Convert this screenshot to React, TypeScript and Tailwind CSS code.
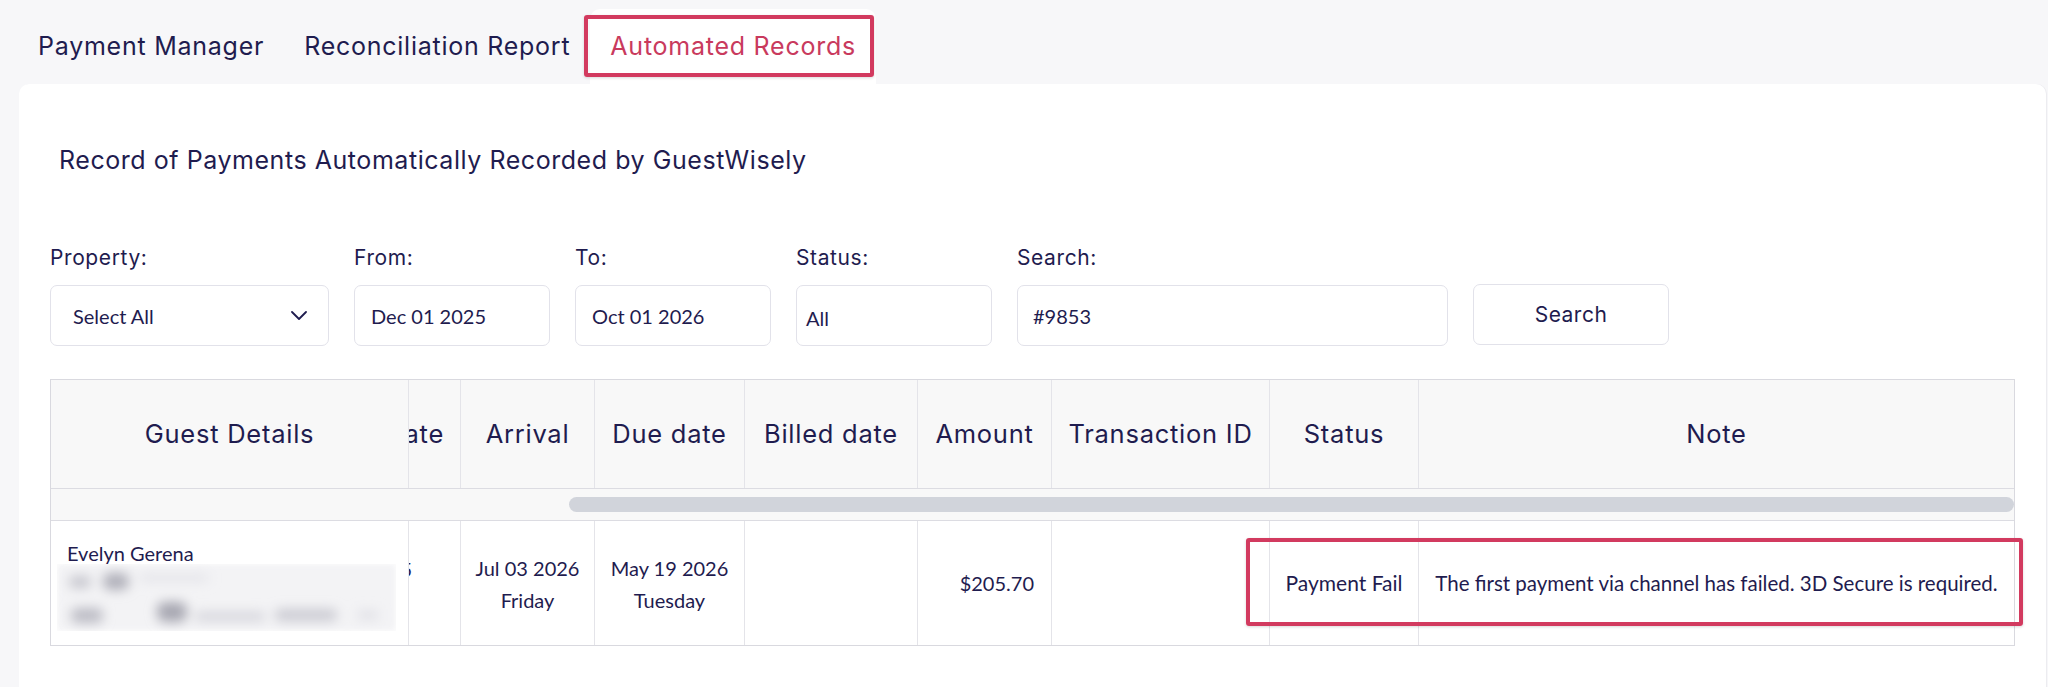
import React from "react";

const heading = "font-['Inter',_'Noto_Sans',_sans-serif]";
const body = "font-['Lato',_'Noto_Sans',_sans-serif]";

function Tabs() {
  return (
    <div className={`flex h-[84px] items-end pl-[18px] ${heading} text-[25px] tracking-[0.75px] text-[#1f1c4f]`}>
      <div className="flex h-[75px] items-center px-5">Payment Manager</div>
      <div className="flex h-[75px] items-center px-5">Reconciliation Report</div>
      <div className="relative flex h-[75px] items-center rounded-t-[10px] bg-white px-5 text-[#c93a5d]">
        Automated Records
        <span className="pointer-events-none absolute -left-[6px] top-[6px] right-[2px] bottom-[7px] rounded-[3px] border-[4px] border-[#d23a5f] shadow-[0_1px_3px_rgba(0,0,0,0.15)]" />
      </div>
    </div>
  );
}

function Field({ label, children, width }: { label: string; children: React.ReactNode; width: string }) {
  return (
    <div className={`flex flex-col gap-[15px] ${width}`}>
      <div className={`${heading} text-[21px] leading-[24px] tracking-[0.6px] text-[#1f1c4f]`}>{label}</div>
      {children}
    </div>
  );
}

const boxCls = `flex h-[61px] items-center rounded-[7px] border border-[#e2e2ea] bg-white ${body} text-[20px] text-[#1f1c4f]`;

function Filters() {
  return (
    <div className="flex items-end gap-[25px]">
      <Field label="Property:" width="w-[279px]">
        <div className={`${boxCls} justify-between pl-[22px] pr-[21px]`}>
          <span>Select All</span>
          <svg width="16" height="9" viewBox="0 0 16 9" fill="none">
            <path d="M1 1l7 7 7-7" stroke="#1f1c4f" strokeWidth="1.8" strokeLinecap="round" strokeLinejoin="round" />
          </svg>
        </div>
      </Field>
      <Field label="From:" width="w-[196px]">
        <div className={`${boxCls} pl-[16px]`}>Dec 01 2025</div>
      </Field>
      <Field label="To:" width="w-[196px]">
        <div className={`${boxCls} pl-[16px]`}>Oct 01 2026</div>
      </Field>
      <Field label="Status:" width="w-[196px]">
        <div className={`${boxCls} pl-[9px] pt-[4px]`}>All</div>
      </Field>
      <Field label="Search:" width="w-[431px]">
        <div className={`${boxCls} pl-[15px]`}>#9853</div>
      </Field>
      <button
        className={`mb-[1px] h-[61px] w-[196px] rounded-[7px] border border-[#e2e2ea] bg-white ${heading} text-[21px] tracking-[0.5px] text-[#1f1c4f]`}
      >
        Search
      </button>
    </div>
  );
}

const cols = "grid grid-cols-[357px_52px_134px_150px_173px_134px_218px_149px_1fr]";

function RedactedLines() {
  return (
    <svg width="339" height="67" viewBox="0 0 339 67" className="block">
      <defs>
        <filter id="soft" x="-30%" y="-80%" width="160%" height="260%">
          <feGaussianBlur stdDeviation="6" />
        </filter>
        <filter id="haze">
          <feGaussianBlur stdDeviation="3" />
        </filter>
      </defs>
      <rect x="0" y="0" width="339" height="67" fill="#f3f3f5" filter="url(#haze)" />
      <g filter="url(#soft)">
        <rect x="12" y="12" width="22" height="12" rx="5" fill="#c6c6ce" />
        <rect x="46" y="9" width="26" height="17" rx="7" fill="#b0b0ba" />
        <rect x="82" y="10" width="70" height="8" rx="4" fill="#e4e4e9" />
        <rect x="14" y="44" width="32" height="15" rx="6" fill="#bcbcc5" />
        <rect x="100" y="38" width="30" height="20" rx="8" fill="#a8a8b2" />
        <rect x="138" y="48" width="70" height="9" rx="4" fill="#d4d4db" />
        <rect x="218" y="45" width="62" height="12" rx="5" fill="#cacad2" />
        <rect x="300" y="46" width="22" height="10" rx="4" fill="#e2e2e7" />
      </g>
    </svg>
  );
}

function Table() {
  const th = "flex items-center justify-center border-l border-[#e4e4e9] first:border-l-0";
  const td = "flex items-center border-l border-[#e4e4e9] first:border-l-0";
  return (
    <div className="relative">
      <div className="border border-[#d9d9df]">
        <div className={`${cols} h-[108px] bg-[#f8f8f8] ${heading} text-[25.5px] tracking-[0.75px] text-[#1f1c4f]`}>
          <div className={th}>Guest Details</div>
          <div className={`${th} justify-end overflow-hidden whitespace-nowrap pr-[16px]`}>Date</div>
          <div className={th}>Arrival</div>
          <div className={th}>Due date</div>
          <div className={`${th} whitespace-nowrap`}>Billed date</div>
          <div className={th}>Amount</div>
          <div className={`${th} whitespace-nowrap`}>Transaction ID</div>
          <div className={th}>Status</div>
          <div className={th}>Note</div>
        </div>
        <div className="flex h-[33px] items-center border-y border-[#dcdce2] bg-[#f8f8f8] pl-[518px]">
          <div className="h-[15px] w-full rounded-full bg-[#d1d4db]" />
        </div>
        <div className={`${cols} h-[124px] bg-white ${body} text-[20px] leading-[32px] text-[#1f1c4f]`}>
          <div className={`${td} flex-col items-start pl-[6px] pt-[21px]`}>
            <div className="pl-[10px] leading-[22px]">Evelyn Gerena</div>
            <RedactedLines />
          </div>
          <div className={`${td} justify-end overflow-hidden whitespace-nowrap pr-[48px] pb-[28px]`}>Dec 15 2025</div>
          <div className={`${td} flex-col justify-center pt-[2px] text-center`}>
            <div>Jul 03 2026</div>
            <div>Friday</div>
          </div>
          <div className={`${td} flex-col justify-center pt-[2px] text-center`}>
            <div>May 19 2026</div>
            <div>Tuesday</div>
          </div>
          <div className={td} />
          <div className={`${td} justify-end pr-[17px]`}>$205.70</div>
          <div className={td} />
          <div className={`${td} justify-center text-[21px]`}>Payment Fail</div>
          <div className={`${td} justify-center whitespace-nowrap text-[20.5px]`}>
            The first payment via channel has failed. 3D Secure is required.
          </div>
        </div>
      </div>
      <span className="pointer-events-none absolute left-[1196px] top-[159px] h-[88px] w-[777px] rounded-[3px] border-[4px] border-[#d23a5f] shadow-[0_1px_3px_rgba(0,0,0,0.15)]" />
    </div>
  );
}

export default function App() {
  return (
    <div className="h-[687px] w-full overflow-hidden bg-[#f7f7f9]">
      <Tabs />
      <div className="ml-[19px] mr-[2px] min-h-[620px] rounded-[10px] bg-white px-[31px] pt-[60px] shadow-[1px_0_0_#ececf0]">
        <h1 className={`ml-[9px] ${heading} text-[25px] leading-[32px] tracking-[0.55px] text-[#1f1c4f]`}>
          Record of Payments Automatically Recorded by GuestWisely
        </h1>
        <div className="mt-[70px]">
          <Filters />
        </div>
        <div className="mt-[33px]">
          <Table />
        </div>
      </div>
    </div>
  );
}
